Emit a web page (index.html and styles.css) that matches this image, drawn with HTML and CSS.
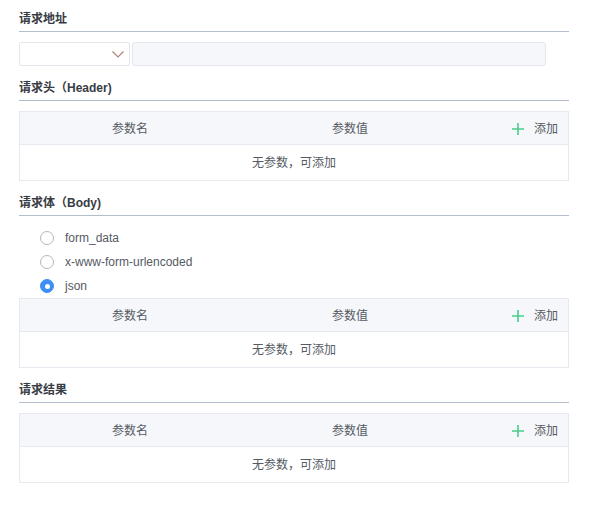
FILE: index.html
```html
<!DOCTYPE html>
<html lang="zh">
<head>
<meta charset="utf-8">
<link rel="stylesheet" href="styles.css">
</head>
<body>
<div class="page">
  <div class="title">请求地址</div>
  <div class="url-row">
    <div class="select">
      <svg class="chev" width="12" height="7" viewBox="0 0 12 7"><path d="M0.5 0.5 L6 6 L11.5 0.5" fill="none" stroke="#b08074" stroke-width="1.1"/></svg>
    </div>
    <div class="url-input"></div>
  </div>

  <div class="title">请求头（Header)</div>
  <div class="table">
    <div class="thead">
      <div class="col">参数名</div>
      <div class="col">参数值</div>
      <div class="col act"><svg class="plus" width="12" height="12" viewBox="0 0 12 12"><path d="M6 0V12M0 6H12" stroke="#48cf8c" stroke-width="1.6"/></svg><span class="add">添加</span></div>
    </div>
    <div class="tbody">无参数，可添加</div>
  </div>

  <div class="title">请求体（Body)</div>
  <div class="radios">
    <div class="radio"><span class="dot"></span><span class="label">form_data</span></div>
    <div class="radio"><span class="dot"></span><span class="label">x-www-form-urlencoded</span></div>
    <div class="radio on"><span class="dot"></span><span class="label">json</span></div>
  </div>
  <div class="table">
    <div class="thead">
      <div class="col">参数名</div>
      <div class="col">参数值</div>
      <div class="col act"><svg class="plus" width="12" height="12" viewBox="0 0 12 12"><path d="M6 0V12M0 6H12" stroke="#48cf8c" stroke-width="1.6"/></svg><span class="add">添加</span></div>
    </div>
    <div class="tbody">无参数，可添加</div>
  </div>

  <div class="title">请求结果</div>
  <div class="table">
    <div class="thead">
      <div class="col">参数名</div>
      <div class="col">参数值</div>
      <div class="col act"><svg class="plus" width="12" height="12" viewBox="0 0 12 12"><path d="M6 0V12M0 6H12" stroke="#48cf8c" stroke-width="1.6"/></svg><span class="add">添加</span></div>
    </div>
    <div class="tbody">无参数，可添加</div>
  </div>
</div>
</body>
</html>
```

FILE: styles.css
```css
* { box-sizing: border-box; }
html, body { margin: 0; padding: 0; background: #fff; }
body {
  font-family: "Liberation Sans", "Noto Sans CJK SC", sans-serif;
  font-size: 12px;
  color: #606266;
}
.page {
  width: 596px;
  padding: 6px 27px 0 19px;
  display: flex;
  flex-direction: column;
}
.title {
  font-weight: bold;
  color: #383c44;
  line-height: 24px;
  padding-top: 1px;
  border-bottom: 1px solid #b4bdcd;
  margin-bottom: 10px;
}
.url-row {
  display: flex;
  gap: 2px;
  height: 24px;
  margin-bottom: 9px;
}
.select {
  width: 111px;
  height: 24px;
  border: 1px solid #e4e7ed;
  border-radius: 2px;
  background: #fff;
  display: flex;
  align-items: center;
  justify-content: flex-end;
  padding-right: 5px;
}
.chev { display: block; margin-top: 1px; }
.url-input {
  width: 414px;
  height: 24px;
  border: 1px solid #e4e7ed;
  border-radius: 3px;
  background: #f5f7fa;
}
.table {
  border: 1px solid #e6e9ef;
  margin-bottom: 9px;
}
.thead {
  display: grid;
  grid-template-columns: 220px 220px 1fr;
  height: 33px;
  padding-top: 2px;
  background: #f5f7fa;
  border-bottom: 1px solid #e6e9ef;
  align-items: center;
  color: #555a63;
}
.col { text-align: center; line-height: 30px; }
.col.act {
  display: flex;
  justify-content: flex-end;
  align-items: center;
  padding-right: 10px;
}
.plus { display: block; margin-right: 10px; }
.tbody {
  height: 35px;
  line-height: 33px;
  padding-top: 2px;
  text-align: center;
  color: #555a63;
}
.radios {
  display: flex;
  flex-direction: column;
  padding-left: 21px;
}
.radio {
  display: flex;
  align-items: center;
  height: 24px;
}
.dot {
  width: 14px;
  height: 14px;
  border: 1px solid #b3b8c2;
  border-radius: 50%;
  background: #fff;
  margin-right: 11px;
  position: relative;
}
.radio.on .dot {
  background: #3d8ef5;
  border-color: #3d8ef5;
}
.radio.on .dot::after {
  content: "";
  position: absolute;
  left: 50%;
  top: 50%;
  width: 5px;
  height: 5px;
  margin: -2.5px 0 0 -2.5px;
  background: #fff;
  border-radius: 50%;
}
.label { color: #555a63; }
```
